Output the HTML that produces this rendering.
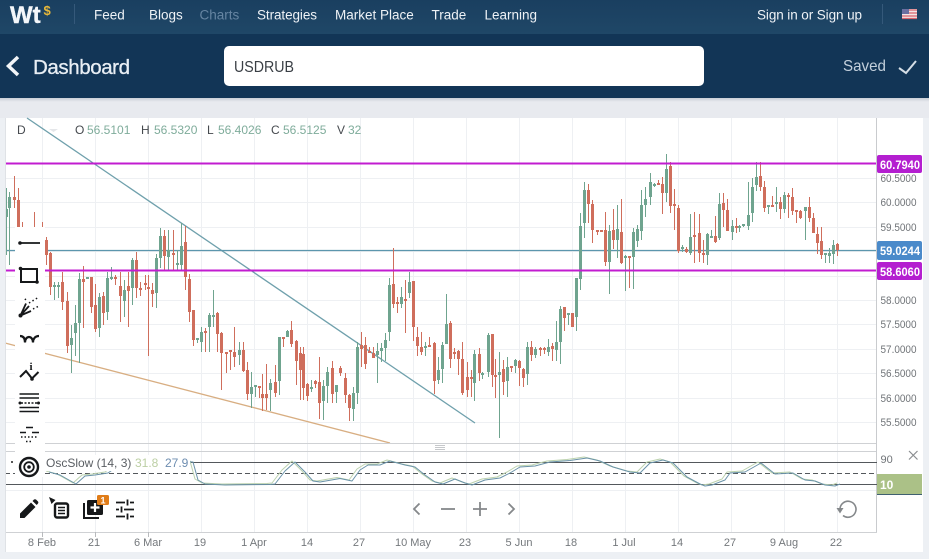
<!DOCTYPE html>
<html><head><meta charset="utf-8"><style>
html,body{margin:0;padding:0;width:929px;height:559px;overflow:hidden;background:#edf0f4}
svg{display:block;font-family:"Liberation Sans",sans-serif}
</style></head><body>
<svg width="929" height="559" viewBox="0 0 929 559" xmlns="http://www.w3.org/2000/svg">
<defs><linearGradient id="hd" x1="0" y1="0" x2="0" y2="1"><stop offset="0" stop-color="#1a3f60"/><stop offset="1" stop-color="#1f4767"/></linearGradient>
<linearGradient id="sh" x1="0" y1="0" x2="0" y2="1"><stop offset="0" stop-color="#c9ced6"/><stop offset="1" stop-color="#e9ebf0"/></linearGradient></defs>
<rect width="929" height="559" fill="#edf0f4"/>
<rect y="98" width="929" height="20" fill="#e8eaef"/>
<rect y="98" width="929" height="4" fill="url(#sh)"/>
<rect width="929" height="34" fill="url(#hd)"/>
<rect y="34" width="929" height="64" fill="#123556"/>
<!-- header -->
<text x="10" y="23" font-size="24" font-weight="700" fill="#f4f7fa" stroke="#f4f7fa" stroke-width=".4">Wt</text>
<text x="43.500" y="15" font-size="13" font-weight="700" fill="#e8b93a">$</text>
<path d="M74.500 4V24M882.500 4V24" stroke="#35597a"/>
<g font-size="13.500" fill="#eef2f6">
<text x="94" y="19.500">Feed</text><text x="149" y="19.500">Blogs</text><text x="199.500" y="19.500" fill="#6685a2">Charts</text><text x="257" y="19.500" textLength="60">Strategies</text><text x="335" y="19.500">Market Place</text><text x="431.500" y="19.500">Trade</text><text x="484.500" y="19.500">Learning</text><text x="757" y="19.500" textLength="105">Sign in or Sign up</text>
</g>
<g><rect x="902" y="9" width="15" height="10" fill="#f2e6e6"/><path d="M902 10H917M902 13H917M902 16H917M902 18.500H917" stroke="#d9646c" stroke-width="1.200"/><rect x="902" y="9" width="7" height="5" fill="#6a6fa0"/></g>
<path d="M18 57L8.500 66L18 75" fill="none" stroke="#f2f5f8" stroke-width="3.500"/>
<text x="33" y="74" font-size="20.500" fill="#e8eef4" stroke="#e8eef4" stroke-width=".3" textLength="97">Dashboard</text>
<rect x="224" y="46" width="480" height="40" rx="5" fill="#fff"/>
<text x="234" y="72" font-size="16" fill="#3a3f45" textLength="60" lengthAdjust="spacingAndGlyphs">USDRUB</text>
<text x="843" y="71" font-size="16" fill="#c3d0dc" textLength="43" lengthAdjust="spacingAndGlyphs">Saved</text>
<path d="M899 68L906 73L916 61" fill="none" stroke="#d5dee6" stroke-width="2"/>
<!-- card -->
<rect x="5" y="118" width="918" height="434" fill="#fff"/>
<path d="M42.500 118V532M95.500 118V532M148.500 118V532M201.500 118V532M254.500 118V532M307.500 118V532M360.500 118V532M413.500 118V532M466.500 118V532M519.500 118V532M572.500 118V532M625.500 118V532M678.500 118V532M731.500 118V532M784.500 118V532M837.500 118V532M5 178.500H877M5 202.500H877M5 227.500H877M5 251.500H877M5 276.500H877M5 300.500H877M5 324.500H877M5 349.500H877M5 373.500H877M5 398.500H877M5 422.500H877M5 490.500H877" stroke="#eef0f3" fill="none"/>
<!-- trend lines -->
<path d="M27 118L475 423" stroke="#6fa0ac" stroke-width="1.300" fill="none"/>
<path d="M5 343L390 443" stroke="#d8ae82" stroke-width="1.300" fill="none"/>
<!-- level lines -->
<path d="M5 250.500H877" stroke="#5c96ad" stroke-width="1.200"/>
<!-- candles -->
<g transform="translate(.5,0)" fill="none">
<path stroke="#cf6e5c" stroke-width="1" d="M14 176V208M18 188V227M22 222V227M34 212V227M42 222V227M46 237V265M50 252V295M62 272V310M67 292V353M83 266V328M91 277V313M95 284V332M103 292V325M115 275V285M120 272V322M128 272V327M136 252V298M140 282V296M145 275V290M148 275V356M152 283V307M164 230V270M173 230V270M185 226V290M189 274V322M193 310V346M205 328V352M217 312V352M221 332V390M226 352V373M230 350V370M234 327V367M243 342V372M247 362V400M259 386V398M262 374V411M266 364V410M275 365V397M283 337V347M291 321V347M296 340V385M300 347V400M303 347V400M307 383V401M315 380V388M319 357V419M332 361V403M340 366V376M345 373V403M349 394V421M361 332V367M365 337V369M369 347V353M373 347V358M393 248V308M397 297V313M405 280V333M413 281V341M417 327V356M421 332V355M429 337V347M434 342V394M450 321V368M454 348V359M458 350V375M462 342V395M467 362V397M471 370V397M479 348V381M492 334V387M495 359V398M503 360V395M511 366V372M519 360V386M523 368V387M531 341V361M540 347V356M544 347V354M552 343V361M564 307V331M572 313V327M588 184V223M592 200V243M597 230V235M601 230V231M605 212V266M613 209V249M621 199V264M629 256V288M658 180V185M662 177V214M670 162V213M674 189V230M678 205V253M686 247V253M694 212V263M699 214V262M703 240V263M715 216V243M723 193V227M727 199V230M736 218V233M760 162V191M764 181V212M772 196V207M780 197V219M788 193V218M792 188V215M796 210V223M800 210V219M809 197V222M813 213V233M817 227V254M821 227V259M837 243V256"/>
<path stroke="#cf6e5c" stroke-width="3" d="M14 197V200M18 200V227M46 240V255M50 253V287M62 282V302M67 301V346M83 279V282M91 277V307M95 305V329M103 296V313M115 277V279M120 286V296M128 286V291M136 260V288M140 288V290M145 283V285M148 287V289M152 290V294M164 236V256M173 253V255M185 242V277M189 279V312M193 310V340M205 331V333M217 313V334M221 333V353M226 352V354M230 350V352M234 352V357M243 350V371M247 370V394M259 386V388M262 394V398M266 394V398M275 382V393M283 337V339M291 330V344M296 341V361M300 353V370M303 354V388M307 384V396M315 381V384M319 382V403M332 368V394M340 368V373M345 378V395M349 395V408M361 345V349M365 345V364M369 351V353M373 353V358M393 284V304M397 302V304M405 299V301M413 281V327M417 337V346M421 347V352M429 345V347M434 343V381M450 323V359M454 352V354M458 351V359M462 359V393M467 377V390M471 377V379M479 354V373M492 334V375M495 375V377M503 369V382M511 366V368M519 361V368M523 369V378M531 347V355M540 348V350M544 348V350M552 346V349M564 307V318M572 313V327M588 190V204M592 204V230M597 230V232M601 230V232M605 230V262M613 230V240M621 232V263M629 256V258M658 183V185M662 184V193M670 166V206M674 204V206M678 208V251M686 249V252M694 235V237M699 233V253M703 253V255M715 236V242M723 203V210M727 210V231M736 226V228M760 176V187M764 187V208M772 205V207M780 202V209M788 195V197M792 197V211M796 210V212M800 211V218M809 207V218M813 218V233M817 234V243M821 241V255M837 244V250"/>
<path stroke="#6fa48f" stroke-width="1" d="M6 188V255M9 192V265M54 282V300M58 282V298M71 325V373M75 305V356M79 273V363M87 277V279M99 293V337M107 272V320M111 267V280M124 280V317M132 258V305M156 254V308M160 228V268M168 230V270M177 250V270M181 223V270M197 338V343M201 327V352M209 313V352M213 290V327M239 342V365M251 372V408M255 385V397M270 379V411M279 337V395M287 330V337M311 380V392M323 380V420M327 367V403M336 385V403M353 387V421M357 342V404M377 343V383M381 343V362M385 333V361M389 278V341M401 287V308M409 272V298M425 342V356M438 357V384M442 342V383M446 294V344M474 350V401M482 372V379M488 333V377M499 352V438M507 357V397M515 359V373M527 342V385M535 347V358M548 339V356M556 321V361M560 306V364M568 313V325M576 278V331M580 213V290M584 182V238M609 225V294M617 205V258M625 255V291M633 228V289M637 225V247M641 190V240M645 187V217M650 173V205M654 183V187M666 154V202M682 245V252M690 214V255M707 233V265M711 230V237M719 193V240M732 220V240M739 225V232M743 224V227M748 182V230M752 178V222M756 162V191M768 205V214M776 187V212M784 192V213M805 207V240M825 253V263M829 248V263M833 240V264"/>
<path stroke="#6fa48f" stroke-width="3" d="M6 209V217M9 197V208M54 285V287M58 285V287M71 338V345M75 323V333M79 279V323M87 277V279M99 297V328M107 278V312M111 277V279M124 290V301M132 260V288M156 258V293M160 236V258M168 250V257M177 263V265M181 246V265M197 338V340M201 332V342M209 315V327M213 315V317M239 350V355M251 387V394M255 385V387M270 383V390M279 337V381M287 331V337M311 387V389M323 386V401M327 372V386M336 385V392M353 393V409M357 347V393M377 351V355M381 348V351M385 340V348M389 285V332M401 297V304M409 282V293M425 346V348M438 370V380M442 345V369M446 324V344M474 354V383M482 373V375M488 335V372M499 372V375M507 367V381M515 360V366M527 347V374M535 349V355M548 347V352M556 342V350M560 309V342M568 313V315M576 278V317M580 226V279M584 190V223M609 231V262M617 229V240M625 256V258M633 232V257M637 229V241M641 205V231M645 199V205M650 182V197M654 184V186M666 169V193M682 247V249M690 237V253M707 234V255M711 236V238M719 204V238M732 226V232M739 226V228M743 224V226M748 215V226M752 187V213M756 177V185M768 205V207M776 202V204M784 195V209M805 207V211M825 253V255M829 253V256M833 245V254"/>
</g>
<path d="M5 163.500H877M5 270.500H877" stroke="#c21cd0" stroke-width="2"/>
<!-- frame lines -->
<path d="M5 443.500H877M5 451.500H877M5 532.500H877" stroke="#cfd1d4"/>
<path d="M876.500 118V532" stroke="#c9cbce"/>
<path d="M435 445.500H445M435 447.500H445M435 449.500H445" stroke="#c6c8cb"/>
<!-- oscillator -->
<path d="M5 462.500H877M5 484.500H877" stroke="#54585c"/>
<path d="M5 473.500H877" stroke="#54585c" stroke-dasharray="5 3"/>
<polyline transform="translate(-3,-1)" fill="none" stroke="#bcd2ae" stroke-width="1" stroke-linejoin="round" points="49,472 60,475 76,484 85,476 95,475 108,473 118,466 135,460 160,460 193,462 198,480 205,484 225,485 270,484.500 275,484 285,471 295,462 305,472 313,481 320,482 340,478.500 352,481 360,470 368,465 380,465 390,461 405,465 415,467 425,475 435,482 443,484 455,479 465,483 472,485 485,480 500,478 510,473 520,467 535,466 550,462 570,460.500 587,458 600,461 613,467 630,472 640,473 650,463 663,460 673,463 687,477 700,484 705,486 712,485 725,480 730,473 745,472 761,463 775,474 793,473 805,480 815,481 825,485 835,486 840,484"/>
<polyline fill="none" stroke="#6a93a8" stroke-width="1" stroke-linejoin="round" points="49,472 60,475 76,484 85,476 95,475 108,473 118,466 135,460 160,460 193,462 198,480 205,484 225,485 270,484.500 275,484 285,471 295,462 305,472 313,481 320,482 340,478.500 352,481 360,470 368,465 380,465 390,461 405,465 415,467 425,475 435,482 443,484 455,479 465,483 472,485 485,480 500,478 510,473 520,467 535,466 550,462 570,460.500 587,458 600,461 613,467 630,472 640,473 650,463 663,460 673,463 687,477 700,484 705,486 712,485 725,480 730,473 745,472 761,463 775,474 793,473 805,480 815,481 825,485 835,486 840,484"/>
<!-- toolbar bg & legend mask -->
<rect x="5" y="455" width="185" height="16" fill="#fff"/>
<rect x="15" y="227" width="30" height="250" fill="#fff"/>
<rect x="5" y="118" width="1" height="434" fill="#dfe2e6"/>
<circle cx="12" cy="462" r="1" fill="#222"/>
<!-- legend -->
<g font-size="12">
<g fill="#45494e"><text x="17" y="134">D</text><text x="75" y="134">O</text><text x="141" y="134">H</text><text x="207" y="134">L</text><text x="271" y="134">C</text><text x="337" y="134">V</text></g>
<g fill="#7fac9b"><text x="87" y="134">56.5101</text><text x="154" y="134">56.5320</text><text x="218" y="134">56.4026</text><text x="283" y="134">56.5125</text><text x="348" y="134">32</text></g>
<text x="46" y="467" fill="#5a5e63">OscSlow (14, 3)</text>
<text x="135" y="467" fill="#bccfa4">31.8</text>
<text x="165" y="467" fill="#6d8db0">27.9</text>
</g>
<path d="M49 129H58L53.500 132Z" fill="#e4e6e9"/>
<!-- price axis -->
<g font-size="11" fill="#707478">
<text x="880.500" y="182" textLength="36" lengthAdjust="spacingAndGlyphs">60.5000</text><text x="880.500" y="206" textLength="36" lengthAdjust="spacingAndGlyphs">60.0000</text><text x="880.500" y="231" textLength="36" lengthAdjust="spacingAndGlyphs">59.5000</text><text x="880.500" y="304" textLength="36" lengthAdjust="spacingAndGlyphs">58.0000</text><text x="880.500" y="328" textLength="36" lengthAdjust="spacingAndGlyphs">57.5000</text><text x="880.500" y="353" textLength="36" lengthAdjust="spacingAndGlyphs">57.0000</text><text x="880.500" y="377" textLength="36" lengthAdjust="spacingAndGlyphs">56.5000</text><text x="880.500" y="402" textLength="36" lengthAdjust="spacingAndGlyphs">56.0000</text><text x="880.500" y="426" textLength="36" lengthAdjust="spacingAndGlyphs">55.5000</text><text x="880.500" y="463">90</text>
</g>
<rect x="877" y="155" width="45" height="18" rx="2" fill="#b41fd0"/>
<rect x="877" y="241" width="45" height="19" rx="2" fill="#4a8aca"/>
<rect x="877" y="262" width="45" height="18" rx="2" fill="#b41fd0"/>
<rect x="877" y="474" width="45" height="20" fill="#abc187"/>
<path d="M877 494.500H922" stroke="#3f6070"/>
<g font-size="12" font-weight="700" fill="#fff"><text x="880" y="169" textLength="40" lengthAdjust="spacingAndGlyphs">60.7940</text><text x="880" y="255" textLength="40" lengthAdjust="spacingAndGlyphs">59.0244</text><text x="880" y="276" textLength="40" lengthAdjust="spacingAndGlyphs">58.6060</text><text x="880" y="489">10</text></g>
<path d="M909 451L917.500 459.500M917.500 451L909 459.500" stroke="#8a8d90" stroke-width="1.200"/>
<!-- time axis -->
<g font-size="11" fill="#74787c" text-anchor="middle">
<text x="42" y="546">8 Feb</text><text x="94" y="546">21</text><text x="148" y="546">6 Mar</text><text x="200" y="546">19</text><text x="254" y="546">1 Apr</text><text x="307" y="546">14</text><text x="359" y="546">27</text><text x="413" y="546">10 May</text><text x="465" y="546">23</text><text x="519" y="546">5 Jun</text><text x="571" y="546">18</text><text x="624" y="546">1 Jul</text><text x="677" y="546">14</text><text x="730" y="546">27</text><text x="784" y="546">9 Aug</text><text x="836" y="546">22</text>
</g>
<path d="M42.500 532V537M95.500 532V537M148.500 532V537" stroke="#b8babd"/>
<!-- toolbar icons -->
<g fill="#16181a" stroke="#16181a">
<path d="M20 243H40" stroke-width="1.800"/><circle cx="20" cy="243" r="1.800" stroke="none"/>
<path d="M21 269H37V282H21Z" fill="none" stroke-width="2"/><circle cx="20.500" cy="268.500" r="1.800" stroke="none"/><circle cx="37" cy="282" r="1.800" stroke="none"/>
<path d="M20.500 315.500L26 303.500M20.500 315.500L31 311M20.500 315.500L29 306" fill="none" stroke-width="1.800"/><circle cx="20.500" cy="315.500" r="2" stroke="none"/>
<path d="M29 303L39 297M33 309L39 306M25 300L27 297" fill="none" stroke-width="1.500" stroke-dasharray="1.500 2.500"/>
<path d="M20 336C24 336 25 339 25 342.500M25 342.500C25 339 27 337 29 337C31 337 33 339 33 342.500M33 342.500C33 339 35 336 39 336" fill="none" stroke-width="2.200"/>
<path d="M20 377L26 371L32 378.500L38.500 372" fill="none" stroke-width="2"/><circle cx="32" cy="379" r="1.800" stroke="none"/>
<text x="29.500" y="370" font-size="11" font-weight="700" font-family="'Liberation Serif',serif" stroke="none">i</text>
<path d="M19.500 394H39M19.500 398H39M19.500 407.500H39M19.500 411.500H39" stroke-width="1.500" fill="none"/>
<path d="M21 403H38" stroke-width="1.500" stroke-dasharray="2 1.500" fill="none"/><circle cx="20" cy="403" r="1.500" stroke="none"/><circle cx="38.500" cy="403" r="1.500" stroke="none"/>
<path d="M26 427.500H33M20 432.500H26M32 432.500H39" stroke-width="1.500" fill="none"/>
<path d="M21 437H38M26 441.500H33" stroke-width="1.500" stroke-dasharray="1.500 2" fill="none"/>
<circle cx="29" cy="467" r="9" fill="none" stroke-width="2.400"/><circle cx="29" cy="467" r="4.800" fill="none" stroke-width="1.800"/><circle cx="29" cy="467" r="1.800" stroke="none"/>
<path stroke="none" d="M20 518V513.500L31 502.500L35.500 507L24.500 518ZM32.500 501L34 499.500Q35 499 36 499.500L38 501.500Q38.700 502.500 38 503.500L36.700 505Z"/>
<path stroke="none" d="M49 497L55.500 500L51.500 504Z"/>
<rect x="55" y="503.500" width="13" height="14" rx="2" fill="none" stroke-width="2.400"/>
<path d="M58 507.500H65M58 510.500H65M58 513.500H65" stroke-width="1.500" fill="none"/>
<path d="M84 503V518H99" fill="none" stroke-width="2"/>
<rect x="87" y="500" width="16" height="15" rx="1.500" stroke="none"/>
<path d="M95 503V512M90.500 507.500H99.500" stroke="#fff" stroke-width="2.200" fill="none"/>
<rect x="97" y="495" width="12" height="10" rx="1.500" fill="#e07c18" stroke="none"/>
<text x="103" y="503.500" font-size="9" font-weight="700" fill="#fff" stroke="none" text-anchor="middle">1</text>
<path d="M116 502.500H125M130 502.500H134M116 509.500H119M124 509.500H134M116 516.500H125M130 516.500H134M127.500 499.500V505.500M121.500 506.500V512.500M127.500 513.500V519.500" fill="none" stroke-width="1.800"/>
</g>
<!-- zoom controls -->
<g fill="none" stroke="#85888b" stroke-width="1.800">
<path d="M419.500 503.500L414 509L419.500 514.500"/><path d="M441 509H455"/><path d="M473 509H487M480 502V516"/><path d="M508.500 503.500L514 509L508.500 514.500"/>
<path d="M840 509A8 8 0 1 1 843 515.500" stroke-width="1.600"/>
</g>
<path d="M836.500 508L843.500 508L840 513.500Z" fill="#85888b"/>
</svg>
</body></html>
